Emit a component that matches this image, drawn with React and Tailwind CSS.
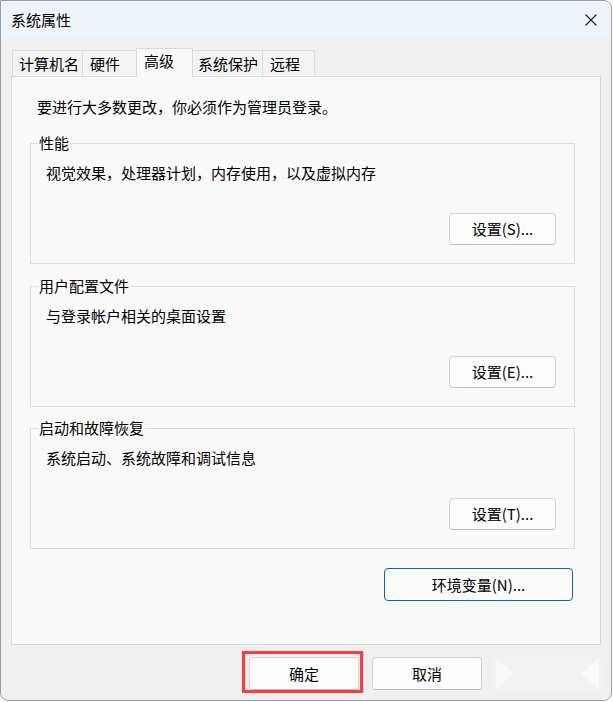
import React from "react";

const font = { fontFamily: '"Noto Sans CJK SC", "Noto Sans", sans-serif' };

const tabs = [
  { label: "计算机名", w: "w-[71px]", pl: "pl-[6px]" },
  { label: "硬件", w: "w-[55px]", pl: "pl-[7px]" },
  { label: "高级", w: "w-[57px]", pl: "pl-[7px]", active: true },
  { label: "系统保护", w: "w-[71px]", pl: "pl-[5px]" },
  { label: "远程", w: "w-[53px]", pl: "pl-[7px]" },
];

const Tab = ({ tab }) =>
  tab.active ? (
    <div
      className={`relative z-10 -mb-px -ml-px h-[29px] ${tab.w} ${tab.pl} border-l border-r border-t border-[#d9d9d9] bg-[#f9f9f9] pt-[2px] leading-[20px]`}
    >
      {tab.label}
    </div>
  ) : (
    <div
      className={`-ml-px first:ml-0 h-[26px] ${tab.w} ${tab.pl} border-l border-r border-t border-[#dcdcdc] bg-[#f3f3f3] pt-[3px] leading-[20px]`}
    >
      {tab.label}
    </div>
  );

const SetButton = ({ children }) => (
  <button className="h-[32px] w-[107px] rounded-[4px] border border-[#d2d2d2] border-b-[#bdbdbd] bg-[#fdfdfd] text-[15px] leading-[20px] text-black">
    {children}
  </button>
);

const Group = ({ title, desc, btn, className = "" }) => (
  <fieldset className={`mr-[25px] ml-[18px] border border-[#dcdcdc] ${className}`}>
    <legend className="ml-[7px] px-[1px] leading-[20px]">{title}</legend>
    <p className="mt-[10px] pl-[15px] leading-[20px]">{desc}</p>
    <div className="mt-[30px] flex justify-end pr-[18px] pb-[18px]">
      <SetButton>{btn}</SetButton>
    </div>
  </fieldset>
);

const BottomButton = ({ children, className = "" }) => (
  <button
    className={`h-[33px] w-[110px] rounded-[4px] border border-[#d2d2d2] border-b-[#bdbdbd] bg-[#fdfdfd] text-[15px] leading-[20px] text-black ${className}`}
  >
    {children}
  </button>
);

export default function App() {
  return (
    <div className="h-[702px] w-[613px] bg-white text-[15px] text-black" style={font}>
      <div className="flex h-[701px] w-[612px] flex-col overflow-hidden rounded-tr-[8px] rounded-b-[8px] border border-[#9c9c9c] bg-[#f0f0f0]">
        {/* title bar */}
        <div className="flex h-[37px] items-center justify-between bg-[#eef2f9] pl-[10px] pr-[14px]">
          <span className="leading-[20px]">系统属性</span>
          <svg width="12" height="12" viewBox="0 0 12 12">
            <path d="M0.5 0.5 L11.5 11.5 M11.5 0.5 L0.5 11.5" stroke="#1b1b1b" strokeWidth="1.1" fill="none" />
          </svg>
        </div>

        {/* tabs */}
        <div className="ml-[11px] mt-[10px] flex h-[28px] items-end">
          {tabs.map((t) => (
            <Tab key={t.label} tab={t} />
          ))}
        </div>

        {/* panel */}
        <div className="mx-[10px] h-[569px] border border-[#d9d9d9] bg-[#f9f9f9] pt-[20px]">
          <p className="pl-[25px] leading-[20px]">要进行大多数更改，你必须作为管理员登录。</p>

          <Group
            className="mt-[16px]"
            title="性能"
            desc="视觉效果，处理器计划，内存使用，以及虚拟内存"
            btn="设置(S)..."
          />
          <Group
            className="mt-[12px]"
            title="用户配置文件"
            desc="与登录帐户相关的桌面设置"
            btn="设置(E)..."
          />
          <Group
            className="mt-[11px]"
            title="启动和故障恢复"
            desc="系统启动、系统故障和调试信息"
            btn="设置(T)..."
          />

          <div className="mt-[19px] flex justify-end pr-[27px]">
            <button className="h-[33px] w-[189px] rounded-[4px] border border-[#0067c0] bg-[#fbfbfb] text-[15px] leading-[20px] text-black">
              环境变量(N)...
            </button>
          </div>
        </div>

        {/* bottom buttons */}
        <div className="mt-[12px] flex justify-end pr-[9px]">
          <div className="relative">
            <BottomButton>确定</BottomButton>
            <div className="pointer-events-none absolute -left-[7px] -top-[6px] -right-[4px] -bottom-[3px] border-[3px] border-[#ff3b3b]" />
          </div>
          <BottomButton className="ml-[13px]">取消</BottomButton>
          <div className="relative ml-[11px] h-[33px] w-[109px] rounded-[4px] bg-[#f2f2f2]">
            <svg className="absolute inset-0" width="109" height="33" viewBox="0 0 109 33">
              <path d="M3 1 L21 16.5 L3 32 Z" fill="#f9f9f9" />
              <path d="M106 1 L88 16.5 L106 32 Z" fill="#f9f9f9" />
            </svg>
          </div>
        </div>
      </div>
    </div>
  );
}
